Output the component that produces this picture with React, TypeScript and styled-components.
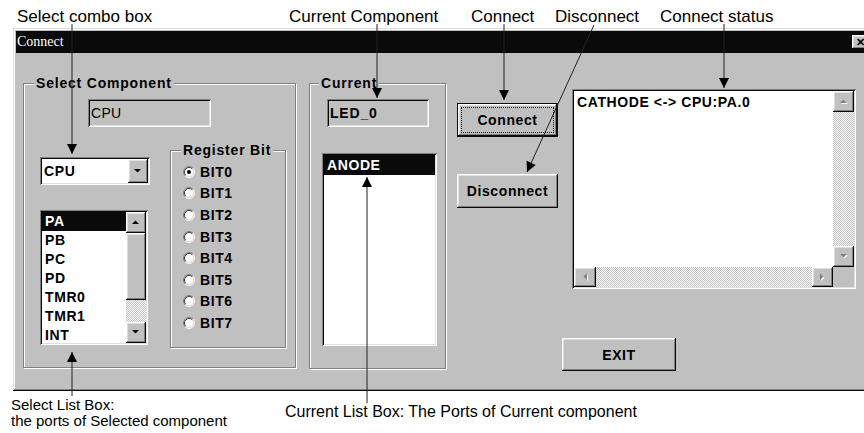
import React from 'react';
import styled, { createGlobalStyle } from 'styled-components';

const FACE = '#c0c0c0';
const SANS = '"Liberation Sans", Arial, sans-serif';

const raised = `box-shadow: inset -1px -1px #0a0a0a, inset 1px 1px #ffffff, inset -2px -2px #808080, inset 2px 2px #dfdfdf;`;
const sunken = `box-shadow: inset 1px 1px #808080, inset -1px -1px #ffffff, inset 2px 2px #0a0a0a, inset -2px -2px #dfdfdf;`;
const checker = `
    background-color: #ffffff;
    background-image: conic-gradient(#c0c0c0 0 25%, #ffffff 0 50%, #c0c0c0 0 75%, #ffffff 0);
    background-size: 2px 2px;
`;

const GlobalStyle = createGlobalStyle`
    html, body {
        margin: 0;
        padding: 0;
        background: #ffffff;
    }
    body {
        font-family: ${SANS};
        color: #000;
    }
`;

type Dir = 'up' | 'down' | 'left' | 'right';

const triPoints: Record<Dir, string> = {
    up: '0,4 7,4 3.5,0.5',
    down: '0,0 7,0 3.5,3.5',
    left: '4,0 4,7 0.5,3.5',
    right: '0,0 0,7 3.5,3.5',
};

// little scroll arrow, grey with a white shadow when disabled
const Arrow: React.FC<{ dir: Dir; disabled?: boolean }> = ({ dir, disabled }) => {
    const horiz = dir === 'left' || dir === 'right';
    const w = horiz ? 5 : 8;
    const h = horiz ? 8 : 5;
    return (
        <svg width={w} height={h} viewBox={`0 0 ${w} ${h}`}>
            {disabled && <polygon points={triPoints[dir]} fill="#ffffff" transform="translate(1 1)" />}
            <polygon points={triPoints[dir]} fill={disabled ? '#808080' : '#000000'} />
        </svg>
    );
};

const Radio: React.FC<{ checked?: boolean }> = ({ checked }) => (
    <svg width="12" height="12" viewBox="0 0 12 12">
        <circle cx="6" cy="6" r="4.5" fill="#ffffff" />
        <path d="M2.11 9.89 A5.5 5.5 0 0 1 9.89 2.11" stroke="#808080" fill="none" />
        <path d="M9.89 2.11 A5.5 5.5 0 0 1 2.11 9.89" stroke="#ffffff" fill="none" />
        <path d="M2.82 9.18 A4.5 4.5 0 0 1 9.18 2.82" stroke="#404040" fill="none" />
        <path d="M9.18 2.82 A4.5 4.5 0 0 1 2.82 9.18" stroke="#dfdfdf" fill="none" />
        {checked && <circle cx="6" cy="6" r="2" fill="#000000" />}
    </svg>
);

const portItems = ['PA', 'PB', 'PC', 'PD', 'TMR0', 'TMR1', 'INT'];
const bits = ['BIT0', 'BIT1', 'BIT2', 'BIT3', 'BIT4', 'BIT5', 'BIT6', 'BIT7'];

const captions = [
    { text: 'Select combo box', x: 17, y: 8, size: 17 },
    { text: 'Current Component', x: 289, y: 8, size: 17 },
    { text: 'Connect', x: 471, y: 8, size: 17 },
    { text: 'Disconnect', x: 555, y: 8, size: 17 },
    { text: 'Connect status', x: 660, y: 8, size: 17 },
    { text: 'Select List Box:', x: 11, y: 397, size: 15 },
    { text: 'the ports of Selected component', x: 11, y: 413, size: 15 },
    { text: 'Current List Box: The Ports of Current component', x: 285, y: 404, size: 16 },
];

const callouts = [
    { x1: 72, y1: 24, x2: 72, y2: 154 },
    { x1: 377, y1: 24, x2: 377, y2: 98 },
    { x1: 504, y1: 24, x2: 504, y2: 100 },
    { x1: 594, y1: 25, x2: 527, y2: 172 },
    { x1: 724, y1: 24, x2: 724, y2: 88 },
    { x1: 72, y1: 396, x2: 72, y2: 352 },
    { x1: 367, y1: 403, x2: 367, y2: 177 },
];

const headPoints = (c: { x1: number; y1: number; x2: number; y2: number }) => {
    const dx = c.x2 - c.x1;
    const dy = c.y2 - c.y1;
    const len = Math.hypot(dx, dy);
    const ux = dx / len;
    const uy = dy / len;
    const bx = c.x2 - ux * 10;
    const by = c.y2 - uy * 10;
    const px = -uy * 5;
    const py = ux * 5;
    return `${c.x2},${c.y2} ${bx + px},${by + py} ${bx - px},${by - py}`;
};

const App: React.FC = () => {
    return (
        <Page>
            <GlobalStyle />
            <Window>
                <TitleBar>
                    <span>Connect</span>
                    <CloseButton>✕</CloseButton>
                </TitleBar>
                <Body>
                    <Group $w={273} $h={285}>
                        <Legend $left={10}>Select Component</Legend>
                        <Stack $top={15} $left={64}>
                            <Edit $w={123}>CPU</Edit>
                        </Stack>
                        <SelectRow>
                            <PortColumn>
                                <Combo>
                                    <span>CPU</span>
                                    <DropButton>
                                        <Arrow dir="down" />
                                    </DropButton>
                                </Combo>
                                <ListBox $w={108} $h={135} $gap={25}>
                                    <ListItems>
                                        {portItems.map((p, i) => (
                                            <ListItem key={p} $selected={i === 0} $h={19}>{p}</ListItem>
                                        ))}
                                    </ListItems>
                                    <VScroll>
                                        <ScrollBtn $w={20} $h={21}><Arrow dir="up" /></ScrollBtn>
                                        <Thumb />
                                        <Track />
                                        <ScrollBtn $w={20} $h={21}><Arrow dir="down" /></ScrollBtn>
                                    </VScroll>
                                </ListBox>
                            </PortColumn>
                            <BitGroup>
                                <Legend $left={10}>Register Bit</Legend>
                                <RadioList>
                                    {bits.map((b, i) => (
                                        <RadioRow key={b}>
                                            <Radio checked={i === 0} />
                                            <span>{b}</span>
                                        </RadioRow>
                                    ))}
                                </RadioList>
                            </BitGroup>
                        </SelectRow>
                    </Group>

                    <Group $w={137} $h={286} $ml={13}>
                        <Legend $left={9}>Current</Legend>
                        <Stack $top={15} $left={17}>
                            <Edit $w={102} $bold>LED_0</Edit>
                        </Stack>
                        <Stack $top={26} $left={12}>
                            <ListBox $w={115} $h={193}>
                                <ListItems>
                                    <ListItem $selected $h={20}>ANODE</ListItem>
                                </ListItems>
                            </ListBox>
                        </Stack>
                    </Group>

                    <ButtonColumn>
                        <PushButton $w={101} $h={34} $default>Connect</PushButton>
                        <PushButton $w={101} $h={34}>Disconnect</PushButton>
                    </ButtonColumn>

                    <RightColumn>
                        <StatusBox>
                            <StatusText>CATHODE &lt;-&gt; CPU:PA.0</StatusText>
                            <VScroll>
                                <ScrollBtn $w={21} $h={21}><Arrow dir="up" disabled /></ScrollBtn>
                                <Track />
                                <ScrollBtn $w={21} $h={21}><Arrow dir="down" disabled /></ScrollBtn>
                            </VScroll>
                            <HScroll>
                                <ScrollBtn $w={22} $h={20}><Arrow dir="left" disabled /></ScrollBtn>
                                <Track />
                                <ScrollBtn $w={21} $h={20}><Arrow dir="right" disabled /></ScrollBtn>
                            </HScroll>
                            <Corner />
                        </StatusBox>
                        <PushButton $w={114} $h={33} $mt={49}>EXIT</PushButton>
                    </RightColumn>
                </Body>
            </Window>

            {captions.map(c => (
                <Caption key={c.text} $x={c.x} $y={c.y} $size={c.size}>{c.text}</Caption>
            ))}
            <Overlay width="864" height="433" viewBox="0 0 864 433">
                {callouts.map((c, i) => (
                    <g key={i}>
                        <line x1={c.x1} y1={c.y1} x2={c.x2} y2={c.y2} stroke="#222" strokeWidth="1" />
                        <polygon points={headPoints(c)} fill="#000" />
                    </g>
                ))}
            </Overlay>
        </Page>
    );
};

export default App;

const Page = styled.div`
    position: relative;
    width: 864px;
    height: 433px;
    overflow: hidden;
    background: #ffffff;
    padding-top: 28px;
    box-sizing: border-box;
`;

const Window = styled.div`
    margin-left: 13px;
    width: 860px;
    height: 363px;
    box-sizing: border-box;
    padding: 3px;
    background: ${FACE};
    box-shadow: inset -1px -1px #0a0a0a, inset 1px 1px #dfdfdf, inset -2px -2px #808080, inset 2px 2px #ffffff;
    display: flex;
    flex-direction: column;
`;

const TitleBar = styled.div`
    flex: none;
    height: 22px;
    background: #0a0a0a;
    color: #ffffff;
    display: flex;
    align-items: center;
    justify-content: space-between;
    padding: 0 2px 0 1px;
    font-family: "Liberation Serif", "Times New Roman", serif;
    font-size: 14px;
`;

const CloseButton = styled.div`
    width: 16px;
    height: 14px;
    background: ${FACE};
    ${raised}
    display: flex;
    align-items: center;
    justify-content: center;
    font: bold 11px ${SANS};
    color: #000;
`;

const Body = styled.div`
    flex: 1;
    display: flex;
    align-items: flex-start;
    padding: 30px 0 0 7px;
    font: bold 14px ${SANS};
    letter-spacing: 0.6px;
`;

const Group = styled.div<{ $w: number; $h: number; $ml?: number }>`
    position: relative;
    flex: none;
    box-sizing: border-box;
    width: ${p => p.$w}px;
    height: ${p => p.$h}px;
    margin-left: ${p => p.$ml ?? 0}px;
    border: 1px solid #808080;
    box-shadow: inset 1px 1px #ffffff, 1px 1px #ffffff;
`;

const Legend = styled.span<{ $left: number }>`
    position: absolute;
    top: -9px;
    left: ${p => p.$left}px;
    padding: 0 2px;
    background: ${FACE};
    font: bold 14px ${SANS};
    line-height: 16px;
    letter-spacing: 0.8px;
    white-space: nowrap;
`;

const Stack = styled.div<{ $top: number; $left: number }>`
    margin: ${p => p.$top}px 0 0 ${p => p.$left}px;
`;

const Edit = styled.div<{ $w: number; $bold?: boolean }>`
    width: ${p => p.$w}px;
    height: 28px;
    box-sizing: border-box;
    background: ${FACE};
    ${sunken}
    padding: 0 3px;
    display: flex;
    align-items: center;
    font-size: 14px;
    font-weight: ${p => (p.$bold ? 'bold' : 'normal')};
    letter-spacing: ${p => (p.$bold ? '0.8px' : '0.3px')};
`;

const SelectRow = styled.div`
    display: flex;
    align-items: flex-start;
    margin: 23px 0 0 16px;
`;

const PortColumn = styled.div`
    width: 110px;
    padding-top: 7px;
    display: flex;
    flex-direction: column;
`;

const Combo = styled.div`
    position: relative;
    width: 110px;
    height: 28px;
    box-sizing: border-box;
    background: #ffffff;
    ${sunken}
    display: flex;
    align-items: center;
    justify-content: space-between;
    padding: 2px 2px 2px 4px;
`;

const DropButton = styled.div`
    width: 20px;
    height: 24px;
    background: ${FACE};
    ${raised}
    display: flex;
    align-items: center;
    justify-content: center;
`;

const ListBox = styled.div<{ $w: number; $h: number; $gap?: number }>`
    width: ${p => p.$w}px;
    height: ${p => p.$h}px;
    margin-top: ${p => p.$gap ?? 0}px;
    box-sizing: border-box;
    background: #ffffff;
    ${sunken}
    padding: 2px;
    display: flex;
    overflow: hidden;
`;

const ListItems = styled.div`
    flex: 1;
    display: flex;
    flex-direction: column;
    overflow: hidden;
`;

const ListItem = styled.div<{ $selected?: boolean; $h: number }>`
    flex: none;
    height: ${p => p.$h}px;
    line-height: ${p => p.$h}px;
    padding-left: 3px;
    background: ${p => (p.$selected ? '#0a0a0a' : 'transparent')};
    color: ${p => (p.$selected ? '#ffffff' : '#000000')};
`;

const VScroll = styled.div`
    flex: none;
    display: flex;
    flex-direction: column;
`;

const HScroll = styled.div`
    display: flex;
`;

const ScrollBtn = styled.div<{ $w: number; $h: number }>`
    flex: none;
    width: ${p => p.$w}px;
    height: ${p => p.$h}px;
    box-sizing: border-box;
    background: ${FACE};
    ${raised}
    display: flex;
    align-items: center;
    justify-content: center;
`;

const Thumb = styled.div`
    flex: none;
    width: 20px;
    height: 67px;
    background: ${FACE};
    ${raised}
`;

const Track = styled.div`
    flex: 1;
    ${checker}
`;

const BitGroup = styled.div`
    position: relative;
    flex: none;
    box-sizing: border-box;
    width: 116px;
    height: 198px;
    margin-left: 20px;
    border: 1px solid #808080;
    box-shadow: inset 1px 1px #ffffff, 1px 1px #ffffff;
`;

const RadioList = styled.div`
    padding: 10px 0 0 12px;
    display: flex;
    flex-direction: column;
`;

const RadioRow = styled.div`
    height: 21.6px;
    display: flex;
    align-items: center;
    gap: 5px;
`;

const ButtonColumn = styled.div`
    flex: none;
    margin: 20px 0 0 11px;
    display: flex;
    flex-direction: column;
    gap: 37px;
`;

const PushButton = styled.div<{ $w: number; $h: number; $default?: boolean; $mt?: number }>`
    position: relative;
    flex: none;
    width: ${p => p.$w}px;
    height: ${p => p.$h}px;
    margin-top: ${p => p.$mt ?? 0}px;
    box-sizing: border-box;
    background: ${FACE};
    border: ${p => (p.$default ? '1px solid #0a0a0a' : 'none')};
    ${raised}
    display: flex;
    align-items: center;
    justify-content: center;
    font: bold 14px ${SANS};
    letter-spacing: 0.6px;

    &::after {
        content: '';
        display: ${p => (p.$default ? 'block' : 'none')};
        position: absolute;
        inset: 3px;
        border: 1px dotted #0a0a0a;
    }
`;

const RightColumn = styled.div`
    flex: none;
    margin-left: 4px;
    padding-top: 6px;
    display: flex;
    flex-direction: column;
`;

const StatusBox = styled.div`
    margin-left: 10px;
    width: 284px;
    height: 200px;
    box-sizing: border-box;
    padding: 2px;
    background: #ffffff;
    ${sunken}
    display: grid;
    grid-template-columns: 1fr 21px;
    grid-template-rows: 1fr 20px;
`;

const StatusText = styled.div`
    padding: 2px 0 0 3px;
    line-height: 18px;
    white-space: nowrap;
    overflow: hidden;
`;

const Corner = styled.div`
    background: ${FACE};
`;

const Caption = styled.span<{ $x: number; $y: number; $size: number }>`
    position: absolute;
    left: ${p => p.$x}px;
    top: ${p => p.$y}px;
    font: ${p => p.$size}px ${SANS};
    line-height: 1;
    white-space: nowrap;
    color: #000;
`;

const Overlay = styled.svg`
    position: absolute;
    left: 0;
    top: 0;
    pointer-events: none;
`;
